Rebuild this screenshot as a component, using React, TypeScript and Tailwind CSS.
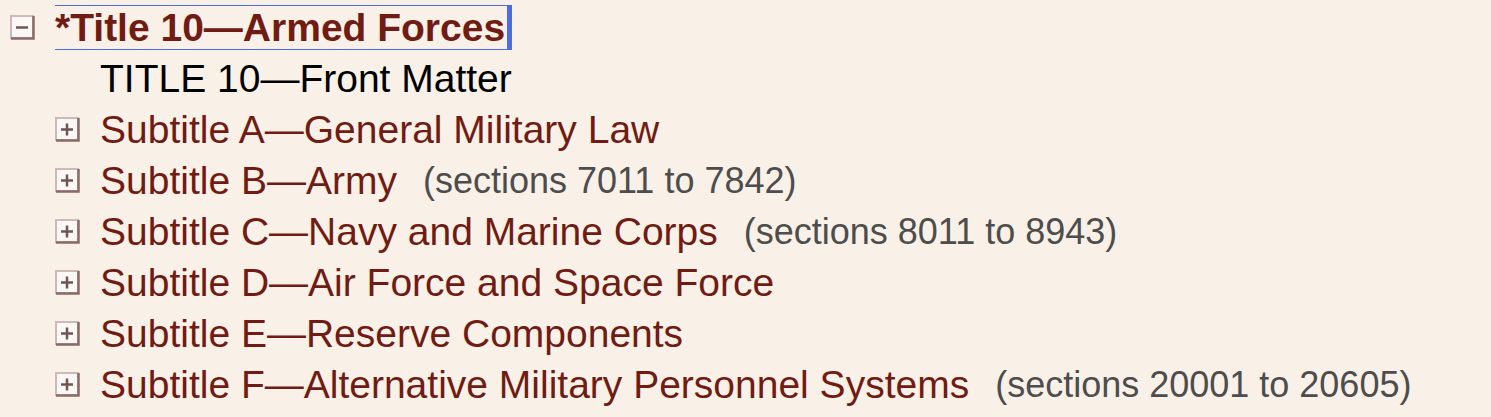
import React from "react";

/**
 * TOC tree — Title 10 outline
 */

interface Node {
  label: string;
  sections?: string;
  plain?: boolean;
}

const children: Node[] = [
  { label: "TITLE 10—Front Matter", plain: true },
  { label: "Subtitle A—General Military Law" },
  { label: "Subtitle B—Army", sections: "(sections 7011 to 7842)" },
  { label: "Subtitle C—Navy and Marine Corps", sections: "(sections 8011 to 8943)" },
  { label: "Subtitle D—Air Force and Space Force" },
  { label: "Subtitle E—Reserve Components" },
  { label: "Subtitle F—Alternative Military Personnel Systems", sections: "(sections 20001 to 20605)" },
];

function ToggleIcon({ open }: { open: boolean }) {
  return (
    <svg width="25" height="25" viewBox="0 0 25 25" className="shrink-0">
      <rect x="1" y="1" width="22" height="22" fill="#fbf7f4" stroke="#cdb9b7" strokeWidth="2" />
      <path d="M1 23.5 H23.5 V1" fill="none" stroke="#8a6a68" strokeWidth="2.5" />
      <path d="M6 12.5 H18" stroke="#6e5557" strokeWidth="2.5" />
      {!open && <path d="M12 6.5 V18.5" stroke="#6e5557" strokeWidth="2.5" />}
    </svg>
  );
}

export default function App() {
  return (
    <div
      className="w-[1491px] h-[417px] bg-[#f9f1e7] pt-[2px] overflow-hidden"
      style={{ fontFamily: '"Liberation Sans", Arial, sans-serif' }}
    >
      <div className="flex items-center h-[51px] pl-[10px]">
        <ToggleIcon open />
        <a className="ml-[20px] h-[45px] flex items-center border-y border-[#4a6ee0] border-r-[5px] pr-[2px] text-[39px] font-bold text-[#701c14] leading-none">
          *Title 10—Armed Forces
        </a>
      </div>
      {children.map((c) => (
        <div key={c.label} className="flex items-center h-[51px] pl-[55px]">
          {c.plain ? <div className="w-[25px] shrink-0" /> : <ToggleIcon open={false} />}
          <span className={`ml-[20px] text-[39px] leading-none whitespace-nowrap ${c.plain ? "text-black" : "text-[#701c14]"}`}>
            {c.label}
          </span>
          {c.sections && (
            <span className="ml-[26px] text-[36px] leading-none text-[#4d4d4d] whitespace-nowrap">{c.sections}</span>
          )}
        </div>
      ))}
    </div>
  );
}
